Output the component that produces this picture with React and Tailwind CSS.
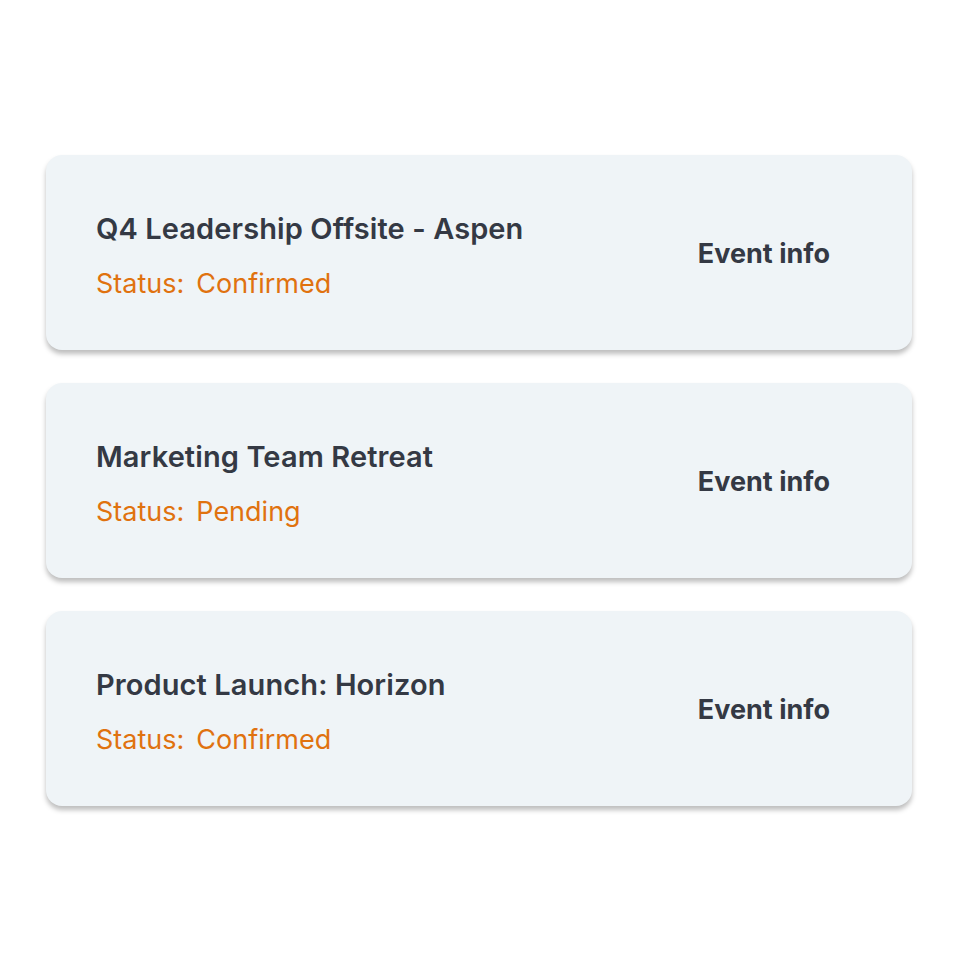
export default function App() {
  const events = [
    { title: "Q4 Leadership Offsite - Aspen", status: "Confirmed" },
    { title: "Marketing Team Retreat", status: "Pending" },
    { title: "Product Launch: Horizon", status: "Confirmed" },
  ];
  return (
    <div className="w-[960px] h-[960px] bg-white flex flex-col justify-center" style={{ fontFamily: "Inter, 'Liberation Sans', sans-serif" }}>
      <div className="ml-[46px] w-[866px] flex flex-col gap-[33px]">
        {events.map((e, i) => (
          <div key={i} className="h-[195px] rounded-[16px] bg-[#eff4f7] shadow-[0_4px_5px_rgba(0,0,0,0.26)] flex items-center justify-between pl-[50px] pr-[82px]">
            <div className="flex flex-col mt-[8px]">
              <div className="text-[29px] leading-[34px] font-semibold text-[#343944] tracking-[0.1px]">{e.title}</div>
              <div className="mt-[22px] text-[27px] leading-[32px] text-[#e0720f] flex">
                <span>Status:</span>
                <span className="ml-[12px]">{e.status}</span>
              </div>
            </div>
            <div className="mt-[4px] text-[27px] font-bold text-[#343944]">Event info</div>
          </div>
        ))}
      </div>
    </div>
  );
}
